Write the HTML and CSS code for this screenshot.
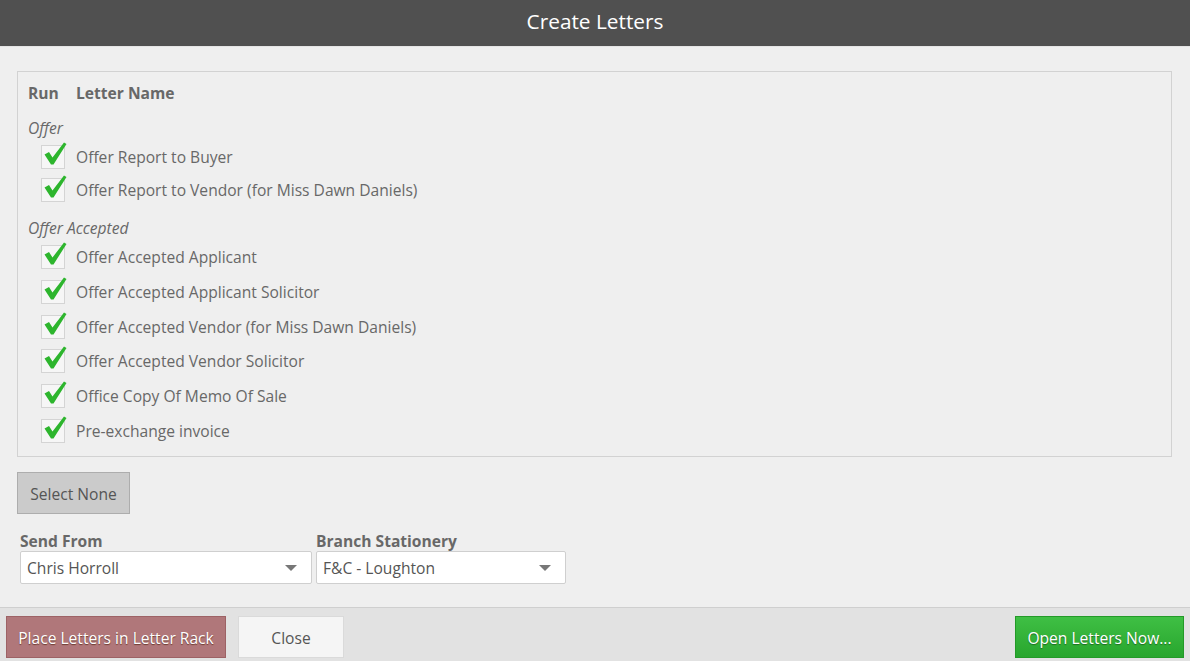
FILE: index.html
```html
<!DOCTYPE html>
<html>
<head>
<meta charset="utf-8">
<link rel="stylesheet" href="styles.css">
</head>
<body>
<div class="dialog">
  <header class="titlebar">Create Letters</header>
  <main class="content">
    <section class="panel">
      <div class="head-row"><span class="col-run">Run</span><span>Letter Name</span></div>
      <div class="group">Offer</div>
      <div class="row tight"><span class="check"><svg viewBox="0 0 26 26" width="26" height="26"><path d="M2.5 13.5 L7 11 L10.5 16.5 L22 1.5 L24.5 3 L11.5 23.5 L9 23.5 Z" fill="#2db52d"/></svg></span>Offer Report to Buyer</div>
      <div class="row tight"><span class="check"><svg viewBox="0 0 26 26" width="26" height="26"><path d="M2.5 13.5 L7 11 L10.5 16.5 L22 1.5 L24.5 3 L11.5 23.5 L9 23.5 Z" fill="#2db52d"/></svg></span>Offer Report to Vendor (for Miss Dawn Daniels)</div>
      <div class="group group2">Offer Accepted</div>
      <div class="row"><span class="check"><svg viewBox="0 0 26 26" width="26" height="26"><path d="M2.5 13.5 L7 11 L10.5 16.5 L22 1.5 L24.5 3 L11.5 23.5 L9 23.5 Z" fill="#2db52d"/></svg></span>Offer Accepted Applicant</div>
      <div class="row"><span class="check"><svg viewBox="0 0 26 26" width="26" height="26"><path d="M2.5 13.5 L7 11 L10.5 16.5 L22 1.5 L24.5 3 L11.5 23.5 L9 23.5 Z" fill="#2db52d"/></svg></span>Offer Accepted Applicant Solicitor</div>
      <div class="row"><span class="check"><svg viewBox="0 0 26 26" width="26" height="26"><path d="M2.5 13.5 L7 11 L10.5 16.5 L22 1.5 L24.5 3 L11.5 23.5 L9 23.5 Z" fill="#2db52d"/></svg></span>Offer Accepted Vendor (for Miss Dawn Daniels)</div>
      <div class="row"><span class="check"><svg viewBox="0 0 26 26" width="26" height="26"><path d="M2.5 13.5 L7 11 L10.5 16.5 L22 1.5 L24.5 3 L11.5 23.5 L9 23.5 Z" fill="#2db52d"/></svg></span>Offer Accepted Vendor Solicitor</div>
      <div class="row"><span class="check"><svg viewBox="0 0 26 26" width="26" height="26"><path d="M2.5 13.5 L7 11 L10.5 16.5 L22 1.5 L24.5 3 L11.5 23.5 L9 23.5 Z" fill="#2db52d"/></svg></span>Office Copy Of Memo Of Sale</div>
      <div class="row"><span class="check"><svg viewBox="0 0 26 26" width="26" height="26"><path d="M2.5 13.5 L7 11 L10.5 16.5 L22 1.5 L24.5 3 L11.5 23.5 L9 23.5 Z" fill="#2db52d"/></svg></span>Pre-exchange invoice</div>
    </section>
    <button class="btn-none">Select None</button>
    <div class="fields">
      <div class="field f1">
        <label>Send From</label>
        <div class="select"><span>Chris Horroll</span><span class="caret"></span></div>
      </div>
      <div class="field f2">
        <label>Branch Stationery</label>
        <div class="select"><span>F&amp;C - Loughton</span><span class="caret"></span></div>
      </div>
    </div>
  </main>
  <footer class="footer">
    <button class="btn btn-rack">Place Letters in Letter Rack</button>
    <button class="btn btn-close">Close</button>
    <button class="btn btn-open">Open Letters Now...</button>
  </footer>
</div>
</body>
</html>
```

FILE: styles.css
```css
* { box-sizing: border-box; }
html, body { margin: 0; padding: 0; }
body {
  width: 1190px;
  height: 661px;
  overflow: hidden;
  background: #efefef;
  font-family: "Open Sans", "Noto Sans", sans-serif;
  color: #686868;
  font-size: 15.6px;
}
.dialog { display: flex; flex-direction: column; height: 661px; }
.titlebar {
  height: 47px;
  background: #505050;
  color: #fff;
  font-size: 20.8px;
  text-align: center;
  line-height: 42px;
  border-bottom: 1px solid #e4e4e4;
}
.content {
  flex: 1;
  padding: 24px 18px 0 17px;
}
.panel {
  border: 1px solid #d2d2d2;
  height: 386px;
  padding: 9px 10px 0 10px;
}
.head-row {
  font-weight: 700;
  height: 24px;
  line-height: 24px;
  display: flex;
}
.col-run { width: 48px; }
.group {
  font-style: italic;
  height: 24px;
  line-height: 24px;
  margin-top: 11px;
}
.group2 { margin-top: 10px; }
.row {
  display: flex;
  align-items: center;
  height: 34.7px;
}
.row.tight { height: 33px; }
.check {
  position: relative;
  width: 24px;
  height: 24px;
  margin-left: 13px;
  margin-right: 11px;
  border: 1px solid #d4d4d4;
  background: #f6f6f6;
  flex: none;
}
.check svg {
  position: absolute;
  left: 0px;
  top: -5px;
}
.btn-none {
  margin-top: 15px;
  width: 113px;
  height: 42px;
  background: #cbcbcb;
  border: 1px solid #adadad;
  font: inherit;
  color: #555;
  padding: 2px 0 0 0;
}
.fields {
  display: flex;
  gap: 4px;
  margin-top: 18px;
  padding-left: 3px;
}
.field label {
  display: block;
  font-weight: 700;
  line-height: 18px;
  height: 19px;
}
.f1 { width: 292px; }
.f2 { width: 250px; }
.select {
  height: 33px;
  background: #fff;
  border: 1px solid #cfcfcf;
  border-radius: 2px;
  display: flex;
  align-items: center;
  justify-content: space-between;
  padding: 1px 14px 0 6px;
  color: #555;
}
.caret {
  width: 0; height: 0;
  border-left: 6px solid transparent;
  border-right: 6px solid transparent;
  border-top: 6px solid #777;
}
.footer {
  height: 54px;
  background: #e2e2e2;
  border-top: 1px solid #cfcfcf;
  display: flex;
  align-items: flex-start;
  padding: 8px 6px 0 6px;
  gap: 12px;
}
.btn {
  height: 42px;
  font: inherit;
  padding: 2px 0 0 0;
}
.btn-rack {
  width: 220px;
  background: #b0777a;
  border: 1px solid #9d6265;
  color: #fff;
  text-shadow: 0 1px 1px #6b3a30;
}
.btn-close {
  width: 106px;
  background: #f5f5f5;
  border: 1px solid #dadada;
  color: #555;
}
.btn-open {
  margin-left: auto;
  width: 169px;
  background: linear-gradient(#3fbf44, #28a62e);
  border: 1px solid #239a28;
  color: #fff;
  text-shadow: 0 1px 1px #1d6b21;
}
```
